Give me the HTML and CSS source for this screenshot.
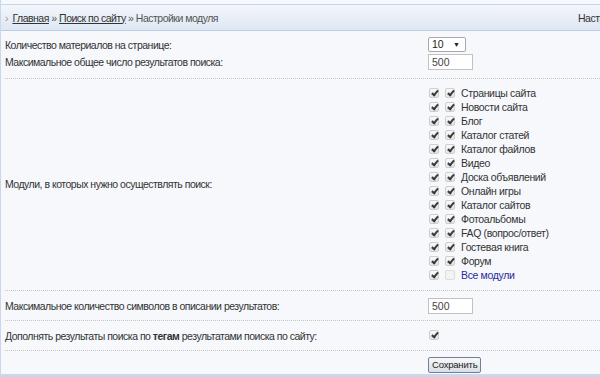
FILE: index.html
```html
<!DOCTYPE html>
<html lang="ru">
<head>
<meta charset="UTF-8" />
<title>Настройки модуля</title>
<link rel="stylesheet" href="styles.css">
</head>
<body>

<div class="page">
  <div class="topbar">
    <div class="crumbs">
      <span class="arr">›</span>
      <a href="#">Главная</a> » <a href="#">Поиск по сайту</a> » Настройки модуля
    </div>
    <div class="right">Настройки модуля</div>
  </div>

  <form class="settings">
    <div class="sect sect-first">
      <div class="row">
        <div class="lbl">Количество материалов на странице:</div>
        <div class="val"><span class="select">10<span class="tri">▼</span></span></div>
      </div>
      <div class="row">
        <div class="lbl">Максимальное общее число результатов поиска:</div>
        <div class="val"><span class="inp">500</span></div>
      </div>
    </div>

    <div class="sect sect-mods">
      <div class="lbl">Модули, в которых нужно осуществлять поиск:</div>
      <div class="val">
        <ul class="mods" id="mods"></ul>
      </div>
    </div>

    <div class="sect sect-row">
      <div class="lbl">Максимальное количество символов в описании результатов:</div>
      <div class="val"><span class="inp">500</span></div>
    </div>

    <div class="sect sect-row">
      <div class="lbl">Дополнять результаты поиска по <b>тегам</b> результатами поиска по сайту:</div>
      <div class="val"><span class="cb on"></span></div>
    </div>

    <div class="sect-btn">
      <div class="lbl"></div>
      <div class="val"><button type="button" class="btn">Сохранить</button></div>
    </div>
  </form>
</div>

<script>
  // список модулей
  const modules = [
    'Страницы сайта', 'Новости сайта', 'Блог', 'Каталог статей',
    'Каталог файлов', 'Видео', 'Доска объявлений', 'Онлайн игры',
    'Каталог сайтов', 'Фотоальбомы', 'FAQ (вопрос/ответ)',
    'Гостевая книга', 'Форум'
  ];

  const list = document.getElementById('mods');
  modules.forEach(function(name) {
    const li = document.createElement('li');
    li.innerHTML = '<span class="cb on"></span><span class="cb on"></span><span class="name"></span>';
    li.querySelector('.name').textContent = name;
    list.appendChild(li);
  });

  const all = document.createElement('li');
  all.innerHTML = '<span class="cb on"></span><span class="cb off"></span><span class="name all">Все модули</span>';
  list.appendChild(all);
</script>

</body>
</html>
```

FILE: styles.css
```css
body {
  margin: 0;
  font-family: "Liberation Sans", Arial, sans-serif;
  font-size: 10.5px;
  letter-spacing: -0.5px;
  color: #333;
  background: #fff;
  overflow: hidden;
}
.page {
  width: 600px;
  height: 377px;
  padding-top: 4px;
  box-sizing: border-box;
  background: #f6f8fc;
  border-left: 1px solid #c8d7ea;
  border-bottom: 3px solid #c9d8ea;
  overflow: hidden;
}
.topbar {
  height: 25px;
  display: flex;
  justify-content: space-between;
  align-items: center;
  border-top: 1px solid #c5d6ea;
  border-bottom: 1px solid #b9cde5;
  background: linear-gradient(#f3f6fb, #dde7f3);
  color: #555;
  padding-left: 4px;
  margin-bottom: 2px;
}
.topbar .arr {
  color: #999;
  margin-right: 2px;
}
.topbar a {
  color: #333;
  text-decoration: underline;
}
.topbar .right {
  color: #333;
  white-space: nowrap;
  width: 22px;
  overflow: hidden;
}
.settings {
  margin: 0 0 0 4px;
}
.sect {
  display: flex;
  border-bottom: 1px dotted #c4c4c4;
}
.lbl {
  width: 423px;
  flex-shrink: 0;
}
.sect-first {
  flex-direction: column;
  padding: 3px 0 7px;
}
.sect-first .row {
  display: flex;
  align-items: center;
  height: 17px;
}
.sect-first .row + .row {
  height: 18px;
}
.sect-mods {
  align-items: center;
  padding: 7px 0 8px;
}
.sect-row {
  align-items: center;
  height: 29px;
}
.sect-btn {
  display: flex;
  padding-top: 6px;
}
.select {
  display: inline-block;
  box-sizing: border-box;
  width: 38px;
  height: 15px;
  line-height: 13px;
  border: 1px solid #a9a9a9;
  border-radius: 2px;
  background: #fff;
  padding-left: 3px;
  color: #222;
  position: relative;
  letter-spacing: 0;
}
.select .tri {
  position: absolute;
  right: 5px;
  top: 0;
  font-size: 7px;
}
.inp {
  display: inline-block;
  box-sizing: border-box;
  width: 45px;
  height: 16px;
  line-height: 14px;
  border: 1px solid #c2c2c2;
  background: #fff;
  padding-left: 3px;
  color: #444;
  letter-spacing: 0;
}
.mods {
  list-style: none;
  margin: 0;
  padding: 0;
}
.mods li {
  display: flex;
  align-items: center;
  height: 14px;
}
.cb {
  display: inline-block;
  box-sizing: border-box;
  width: 10px;
  height: 10px;
  border: 1px solid #cfcfcf;
  border-radius: 2px;
  background: linear-gradient(#fafafa, #e2e2e2);
  position: relative;
  margin-left: 1px;
}
.mods .cb + .cb {
  margin-left: 6px;
}
.cb.on::after {
  content: "";
  position: absolute;
  left: 3px;
  top: 0;
  width: 2px;
  height: 5px;
  border: solid #3a3a3a;
  border-width: 0 2px 2px 0;
  transform: rotate(40deg);
}
.cb.off {
  background: #f3f3f3;
  border-color: #dcdcdc;
}
.name {
  margin-left: 6px;
  letter-spacing: -0.35px;
}
.name.all {
  color: #2a2aa0;
}
.btn {
  font-family: "Liberation Sans", Arial, sans-serif;
  font-size: 9.5px;
  letter-spacing: -0.2px;
  height: 16px;
  padding: 0 3px;
  line-height: 12px;
  color: #222;
  border: 1px solid #6f7f99;
  border-radius: 2px;
  background: linear-gradient(#f8f9fb, #d9dee6);
}
```
